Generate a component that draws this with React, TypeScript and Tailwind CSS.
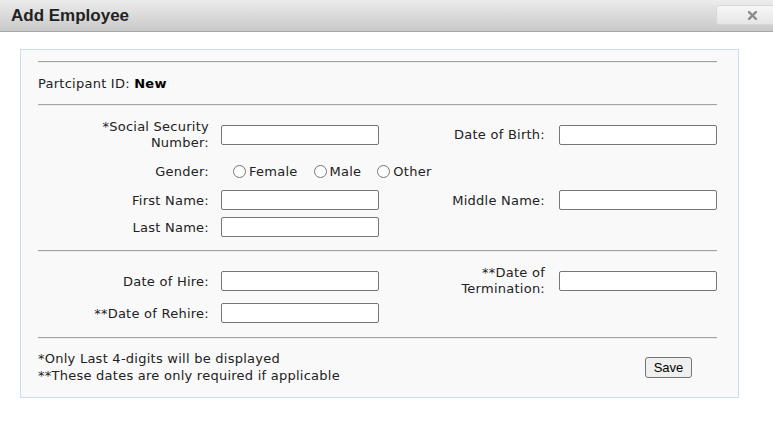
import React from "react";

const font = "font-['DejaVu_Sans',Verdana,sans-serif] tracking-[0.25px]";

function Field({ w = "w-[158px]" }: { w?: string }) {
  return (
    <input
      type="text"
      className={`h-[20px] ${w} rounded-[2px] border border-[#767676] bg-white px-1 text-[13px] outline-none`}
    />
  );
}

function Label({ children, right }: { children: React.ReactNode; right?: boolean }) {
  return (
    <div
      className={`text-right leading-[16px] text-[#222] ${right ? "pr-[14px]" : "pr-[12px]"}`}
    >
      {children}
    </div>
  );
}

function Rule() {
  return <div className="h-[2px] border-t border-b border-t-[#a3a3a3] border-b-[#ececec]" />;
}

function Radio({ label }: { label: string }) {
  return (
    <label className="flex items-center">
      <input type="radio" name="gender" className="m-0 h-[13px] w-[13px]" />
      <span className="ml-[3px] mt-[2px]">{label}</span>
    </label>
  );
}

export default function App() {
  return (
    <div className="h-[429px] w-[773px] overflow-hidden bg-white">
      {/* title bar */}
      <div className="flex h-[32px] items-start justify-between overflow-hidden border-b border-[#a8a8a8] bg-gradient-to-b from-[#ececec] to-[#c9c9c9]">
        <h1 className="ml-[11px] mt-[6px] font-['Liberation_Sans',Arial,sans-serif] text-[17px] font-bold leading-[20px] text-[#222]">
          Add Employee
        </h1>
        <button className="-mr-[15px] mt-[5px] flex h-[20px] w-[72px] shrink-0 items-center justify-center rounded-[3px] border border-[#d8d8d8] bg-gradient-to-b from-[#f6f6f6] to-[#e6e6e6]">
          <svg width="9" height="9" viewBox="0 0 9 9">
            <path d="M1 1 L8 8 M8 1 L1 8" stroke="#8c8c8c" strokeWidth="2.4" strokeLinecap="square" />
          </svg>
        </button>
      </div>

      {/* form panel */}
      <div
        className={`ml-[20px] mt-[17px] w-[719px] border border-[#c9ddf5] bg-[#f9f9f9] px-[17px] pb-[13px] pt-[11px] text-[13px] ${font}`}
      >
        <div className="w-[679px]">
          <Rule />
          <div className="flex h-[41px] items-center text-[#222]">
            Partcipant ID:&nbsp;<span className="font-bold text-black">New</span>
          </div>
          <Rule />

          {/* personal details */}
          <div className="mt-[13px] grid grid-cols-[183px_158px_180px_158px] items-center">
            <div className="flex h-[32px] items-center justify-end">
              <Label>
                *Social Security
                <br />
                Number:
              </Label>
            </div>
            <Field />
            <Label right>Date of Birth:</Label>
            <Field />

            <div className="mt-[9px] flex h-[22px] items-center justify-end pt-[1px]">
              <Label>Gender:</Label>
            </div>
            <div className="col-span-3 mt-[9px] flex h-[22px] items-center gap-[16px] pl-[12px] text-[#222]">
              <Radio label="Female" />
              <Radio label="Male" />
              <Radio label="Other" />
            </div>

            <div className="mt-[7px] pt-[1px]">
              <Label>First Name:</Label>
            </div>
            <div className="mt-[7px] flex h-[22px] items-center">
              <Field />
            </div>
            <div className="mt-[7px] pt-[1px]">
              <Label right>Middle Name:</Label>
            </div>
            <div className="mt-[7px] flex h-[22px] items-center">
              <Field />
            </div>

            <div className="mt-[5px] pt-[1px]">
              <Label>Last Name:</Label>
            </div>
            <div className="mt-[5px] flex h-[22px] items-center">
              <Field />
            </div>
            <div />
            <div />
          </div>

          <div className="mt-[12px]">
            <Rule />
          </div>

          {/* dates */}
          <div className="mt-[13px] grid grid-cols-[183px_158px_180px_158px] items-center">
            <div className="pt-[1px]">
              <Label>Date of Hire:</Label>
            </div>
            <Field />
            <div className="flex h-[32px] items-center justify-end">
              <Label right>
                **Date of
                <br />
                Termination:
              </Label>
            </div>
            <Field />

            <div className="mt-[5px] pt-[1px]">
              <Label>**Date of Rehire:</Label>
            </div>
            <div className="mt-[5px] flex h-[22px] items-center">
              <Field />
            </div>
            <div />
            <div />
          </div>

          <div className="mt-[13px]">
            <Rule />
          </div>

          <div className="mt-[11px] flex items-start justify-between">
            <div className="leading-[17px] text-[#222]">
              *Only Last 4-digits will be displayed
              <br />
              **These dates are only required if applicable
            </div>
            <button className="mr-[25px] mt-[7px] h-[21px] w-[47px] rounded-[3px] border border-[#767676] bg-[#efefef] font-['Liberation_Sans',Arial,sans-serif] text-[13px] leading-[19px] tracking-normal text-black">
              Save
            </button>
          </div>
        </div>
      </div>
    </div>
  );
}
